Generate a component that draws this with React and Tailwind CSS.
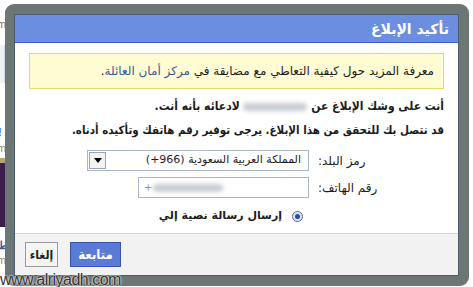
import React from "react";

const ar = "font-['DejaVu_Sans',Tahoma,sans-serif]";
const arCond = "font-['DejaVu_Sans_Condensed','DejaVu_Sans',Tahoma,sans-serif]";

function BackdropStrip() {
  // sliver of the page behind the dialog
  return (
    <div className="w-[5px] shrink-0 flex flex-col overflow-hidden text-[11px] leading-none font-['Liberation_Sans',sans-serif]">
      <span className="mt-[19px] -ml-[3px] text-[#777]">m</span>
      <div className="mt-[15px] h-[38px] bg-[#eef2f7] border-r border-[#cfd6e0]" />
      <span className="mt-[44px] -ml-[2px] text-[#3b5998] font-bold">!</span>
      <span className="mt-[5px] -ml-[3px] text-[#888]">m</span>
      <div className="mt-[4px] h-[5px] bg-[#b8a27a]" />
      <div className="h-[64px] bg-[#3d1d4d]" />
      <span className="mt-[13px] -ml-[2px] text-[#3b5998] font-bold">ط</span>
      <span className="mt-[4px] -ml-[3px] text-[#888]">m</span>
    </div>
  );
}

function Blur({ w }) {
  return <span className="inline-block h-[8px] align-middle rounded-sm bg-[#c9ccd3] blur-[2px]" style={{ width: w }} />;
}

export default function App() {
  return (
    <div className="relative w-[473px] h-[287px] overflow-hidden bg-white flex">
      <BackdropStrip />

      <div className="mt-[4px] w-[464px] h-[282px] shrink-0 rounded-[9px] bg-[#6c7675] pt-[10px] pl-[9px] pr-[10px] pb-[10px]">
        <div dir="rtl" className={`h-[262px] flex flex-col bg-white border border-[#4d5b6e] ${ar}`}>
          {/* title bar */}
          <div className="h-[28px] shrink-0 bg-[#6b8ee0] border-b border-[#3c5fc4] flex items-center pr-[9px]">
            <h1 className="text-white font-bold text-[14px] leading-none">تأكيد الإبلاغ</h1>
          </div>

          {/* body */}
          <div className="flex-1 px-[14px] pt-[10px] text-[#1c1c1c]">
            <div className="h-[36px] bg-[#fffbd2] border border-[#e2d66e] flex items-center pr-[9px] text-[12px]">
              <p>
                معرفة المزيد حول كيفية التعاطي مع مضايقة في{" "}
                <span className="text-[#3b5998]">مركز أمان العائلة</span>.
              </p>
            </div>

            <p className={`mt-[9px] text-[12px] font-bold leading-[16px] ${arCond}`}>
              أنت على وشك الإبلاغ عن <Blur w={64} /> لادعائه بأنه أنت.
            </p>
            <p className={`mt-[8px] text-[11.5px] font-bold leading-[16px] ${arCond}`}>
              قد نتصل بك للتحقق من هذا الإبلاغ. يرجى توفير رقم هاتفك وتأكيده أدناه.
            </p>

            {/* form */}
            <div className="mt-[12px] flex flex-col gap-[6px] text-[12px]">
              <div className="flex items-center">
                <label className="w-[135px] shrink-0 pl-[9px] text-left">رمز البلد:</label>
                <div className="w-[222px] h-[21px] flex items-center justify-between border border-[#a9b4c4] bg-white pr-[7px] pl-[1px] text-[11px]">
                  <span>
                    المملكة العربية السعودية <span className="inline-block [direction:ltr]">(+966)</span>
                  </span>
                  <span className="w-[17px] h-[17px] flex items-center justify-center border border-[#9aa3ae] bg-[#f3f3f3]">
                    <svg width="8" height="5" viewBox="0 0 8 5"><path d="M0 0h8L4 5z" fill="#000" /></svg>
                  </span>
                </div>
              </div>
              <div className="flex items-center">
                <label className="w-[135px] shrink-0 pl-[9px] text-left">رقم الهاتف:</label>
                <div dir="ltr" className="w-[171px] h-[21px] flex items-center border border-[#a9b4c4] bg-white pl-[5px]">
                  <span className="text-[#8a8f98] text-[10px] mr-[1px]">+</span>
                  <Blur w={70} />
                </div>
              </div>
            </div>

            <div className="mt-[10px] flex items-center pr-[141px] gap-[10px] text-[11px] font-bold">
              <span className="w-[11px] h-[11px] rounded-full border border-[#5a6c8a] bg-[#dbe6f5] flex items-center justify-center">
                <span className="w-[5px] h-[5px] rounded-full bg-[#2a4aa8]" />
              </span>
              <span>إرسال رسالة نصية إلي</span>
            </div>
          </div>

          {/* footer */}
          <div className="h-[42px] shrink-0 border-t border-[#cfd3d8] bg-[#f2f2f2] flex items-center gap-[12px] pl-[10px]" dir="ltr">
            <button className={`w-[33px] h-[25px] border border-[#9a9a9a] bg-[#f4f4f4] text-[12px] font-bold text-[#222] ${arCond}`}>إلغاء</button>
            <button className={`w-[51px] h-[25px] border border-[#3a55a7] bg-[#5a7ad7] text-[13px] font-bold text-white ${arCond}`}>متابعة</button>
          </div>
        </div>
      </div>

      <span className="absolute left-0 bottom-[-2px] text-[16px] leading-[18px] tracking-[-0.5px] text-[#333] font-['Liberation_Sans_Narrow','Liberation_Sans',sans-serif] [text-shadow:0_0_2px_#fff,0_0_2px_#fff]">
        www.alriyadh.com
      </span>
    </div>
  );
}
